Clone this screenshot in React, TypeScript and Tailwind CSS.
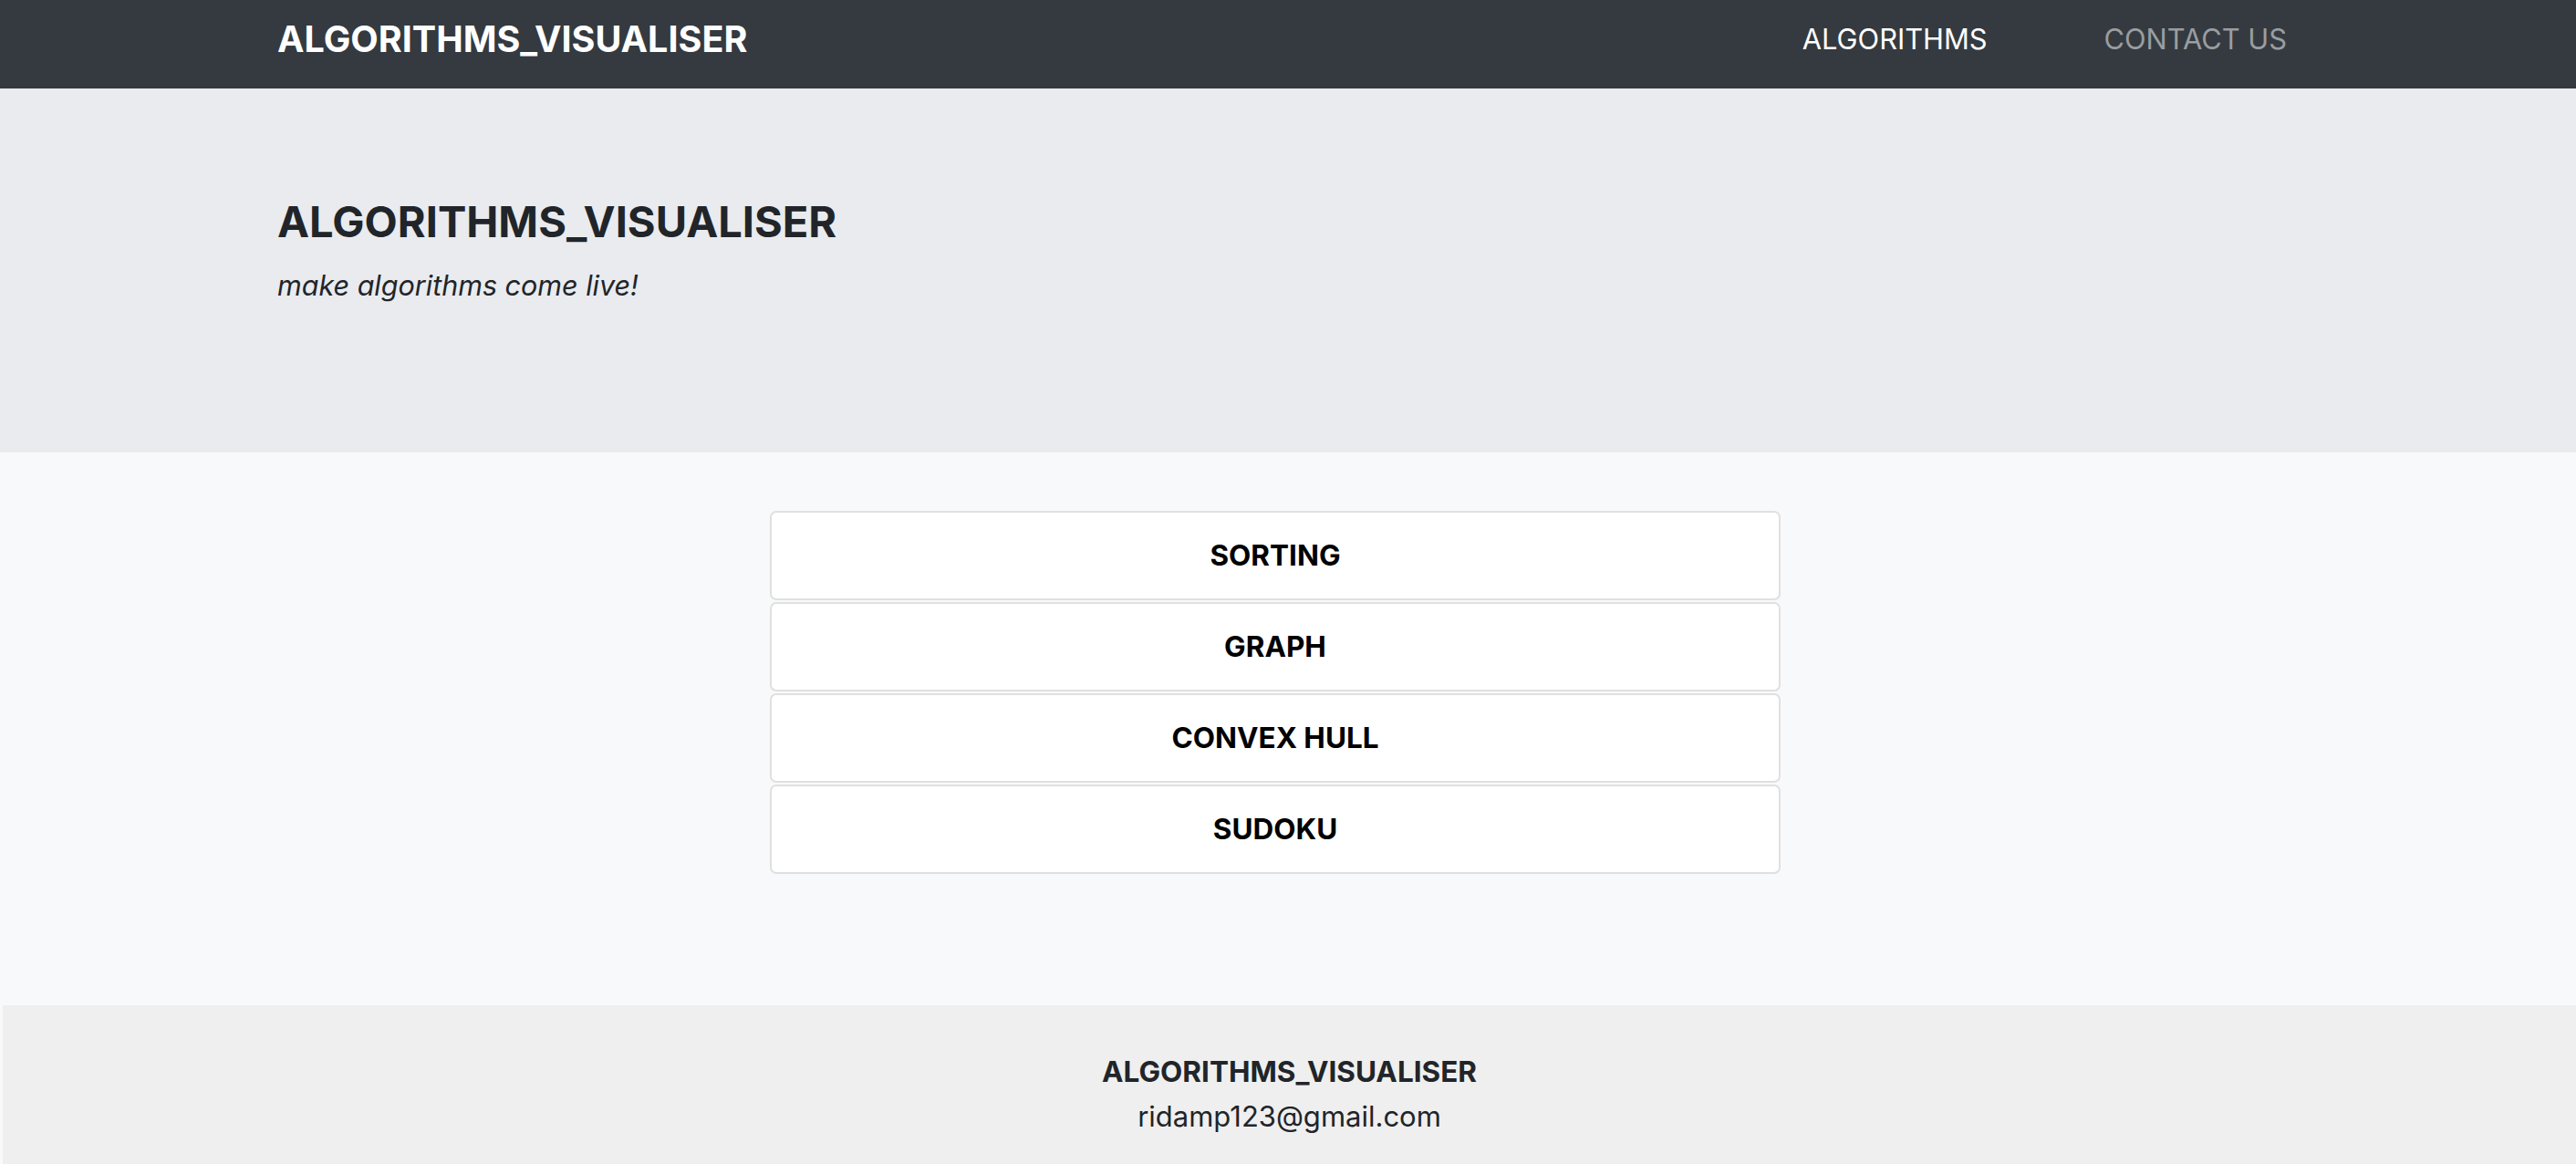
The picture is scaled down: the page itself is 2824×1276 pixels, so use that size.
import React from "react";

const algorithms = ["SORTING", "GRAPH", "CONVEX HULL", "SUDOKU"];

const App = () => {
  return (
    <div className="min-h-screen bg-[#f8f9fa] font-['Inter',sans-serif] text-[#212529]">
      {/* navbar */}
      <nav className="flex h-[97px] items-center justify-between bg-[#343a40] pb-[12px] pl-[304px] pr-[317px]">
        <a className="text-[39.5px] font-bold leading-[54px] text-white">ALGORITHMS_VISUALISER</a>
        <div className="flex items-center gap-[128px] text-[30.8px] leading-[43px]">
          <a className="text-white">ALGORITHMS</a>
          <a className="text-[#9a9da0]">CONTACT US</a>
        </div>
      </nav>

      {/* jumbotron */}
      <header className="flex h-[399px] flex-col bg-[#e9ebef] pl-[304px] pt-[118px]">
        <h1 className="text-[47px] font-bold leading-[56px]">ALGORITHMS_VISUALISER</h1>
        <p className="mt-[20px] text-[30.5px] italic leading-[43px]">make algorithms come live!</p>
      </header>

      {/* algorithm list */}
      <main className="h-[606px] pt-[64px]">
        <div className="ml-[844px] flex w-[1108px] flex-col gap-[2px]">
          {algorithms.map((name) => (
            <button
              key={name}
              className="flex h-[98px] items-center justify-center rounded-[7px] border-2 border-[#e0e0e0] bg-white text-[31.5px] font-bold text-black"
            >
              {name}
            </button>
          ))}
        </div>
      </main>

      {/* footer */}
      <footer className="ml-[3px] flex flex-col items-center bg-[#efefef] pb-[60px] pt-[50px]">
        <h6 className="text-[31.5px] font-bold leading-[46px]">ALGORITHMS_VISUALISER</h6>
        <span className="mt-[3px] text-[31px] leading-[46px]">ridamp123@gmail.com</span>
      </footer>
    </div>
  );
};

export default App;
